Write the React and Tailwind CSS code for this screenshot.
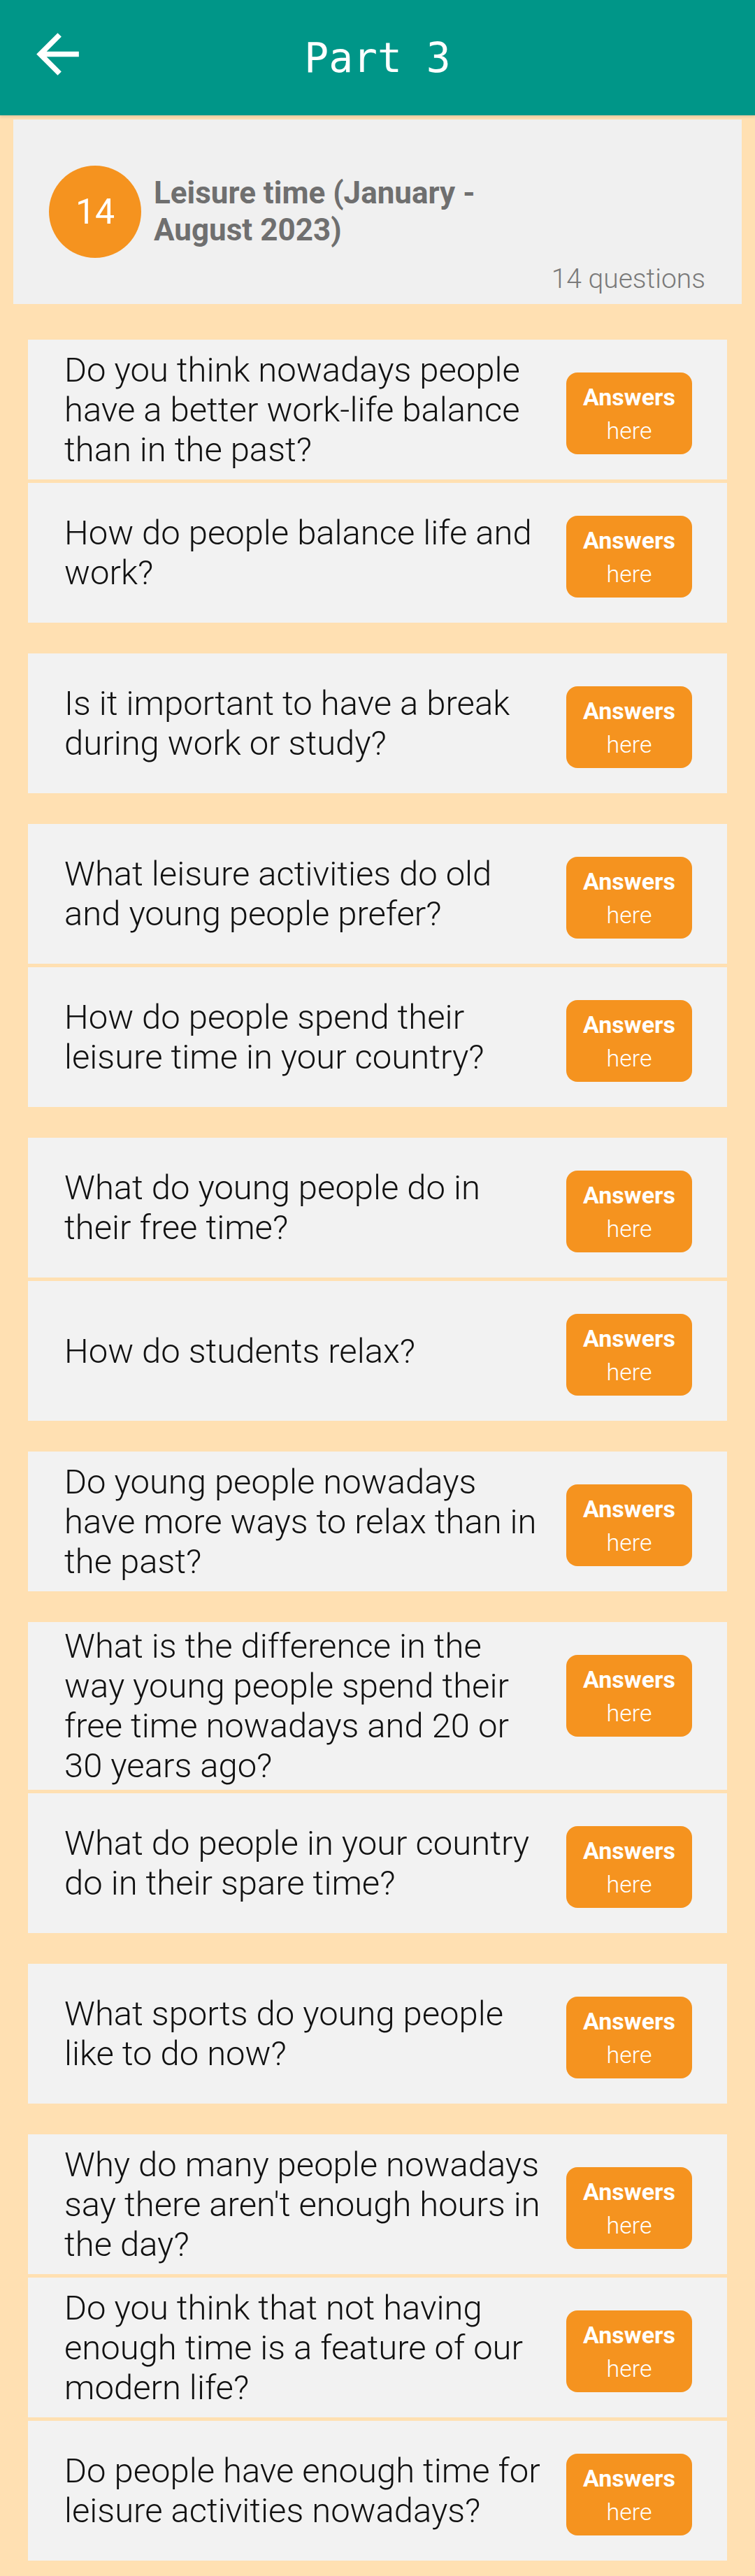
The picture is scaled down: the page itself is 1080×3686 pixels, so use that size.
// Line breaks follow the app's wrapping so the rows keep their heights
const questions = [
  { text: 'Do you think nowadays people\nhave a better work-life balance\nthan in the past?', gap: 'mt-[51px]' },
  { text: 'How do people balance life and\nwork?', gap: 'mt-[5px]' },
  { text: 'Is it important to have a break\nduring work or study?', gap: 'mt-[44px]' },
  { text: 'What leisure activities do old\nand young people prefer?', gap: 'mt-[44px]' },
  { text: 'How do people spend their\nleisure time in your country?', gap: 'mt-[5px]' },
  { text: 'What do young people do in\ntheir free time?', gap: 'mt-[44px]' },
  { text: 'How do students relax?', gap: 'mt-[5px]' },
  { text: 'Do young people nowadays\nhave more ways to relax than in\nthe past?', gap: 'mt-[44px]' },
  { text: 'What is the difference in the\nway young people spend their\nfree time nowadays and 20 or\n30 years ago?', gap: 'mt-[44px]' },
  { text: 'What do people in your country\ndo in their spare time?', gap: 'mt-[5px]' },
  { text: 'What sports do young people\nlike to do now?', gap: 'mt-[44px]' },
  { text: "Why do many people nowadays\nsay there aren't enough hours in\nthe day?", gap: 'mt-[44px]' },
  { text: 'Do you think that not having\nenough time is a feature of our\nmodern life?', gap: 'mt-[5px]' },
  { text: 'Do people have enough time for\nleisure activities nowadays?', gap: 'mt-[5px]' },
];

function QuestionRow({ text, gap }) {
  return (
    <div className={`${gap} mx-[40px] flex min-h-[200px] bg-[#f2f2f2] pl-[52px] pr-[50px]`}>
      <p className="flex-1 self-center whitespace-pre-line py-[6px] pr-[6px] text-[49px] font-light leading-[57px] text-[#111111]">
        {text}
      </p>
      <button
        type="button"
        className="mt-[47px] flex h-[117px] w-[180px] shrink-0 flex-col items-center justify-center self-start rounded-[16px] bg-[#f5931f] text-[34px] leading-[48px] text-white"
      >
        <span className="font-bold">Answers</span>
        <span className="font-light">here</span>
      </button>
    </div>
  );
}

export default function App() {
  return (
    <div className="min-h-[3686px] bg-[#ffe0b2] pb-[22px] font-['Roboto',sans-serif]">
      {/* Toolbar */}
      <header className="relative flex h-[165px] items-center justify-center bg-[#009688] shadow-[0_2px_4px_rgba(0,0,0,0.12)]">
        <svg
          xmlns="http://www.w3.org/2000/svg"
          viewBox="0 0 24 24"
          fill="white"
          className="absolute left-[37px] top-[32px] h-[91px] w-[91px]"
        >
          <path d="M20 11H7.83l5.59-5.59L12 4l-8 8 8 8 1.41-1.41L7.83 13H20v-2z" />
        </svg>
        <h1 className="font-['DejaVu_Sans_Mono',monospace] text-[58px] leading-none text-white">Part 3</h1>
      </header>

      {/* Topic card */}
      <div className="mx-[19px] mt-[6px] bg-[#f0f0f0] pl-[51px] pr-[52px] pt-[66px] pb-[13px]">
        <div className="flex items-center gap-[18px]">
          <div className="flex h-[132px] w-[132px] shrink-0 items-center justify-center rounded-full bg-[#f5931f] text-[50px] text-white">
            14
          </div>
          <h2 className="text-[44px] font-bold leading-[53px] text-[#6f6f6f]">
            Leisure time (January -<br />August 2023)
          </h2>
        </div>
        <p className="mt-[7px] text-right text-[39px] font-light leading-[46px] text-[#7a7a7a]">14 questions</p>
      </div>

      {questions.map((q, i) => (
        <QuestionRow key={i} text={q.text} gap={q.gap} />
      ))}
    </div>
  );
}
